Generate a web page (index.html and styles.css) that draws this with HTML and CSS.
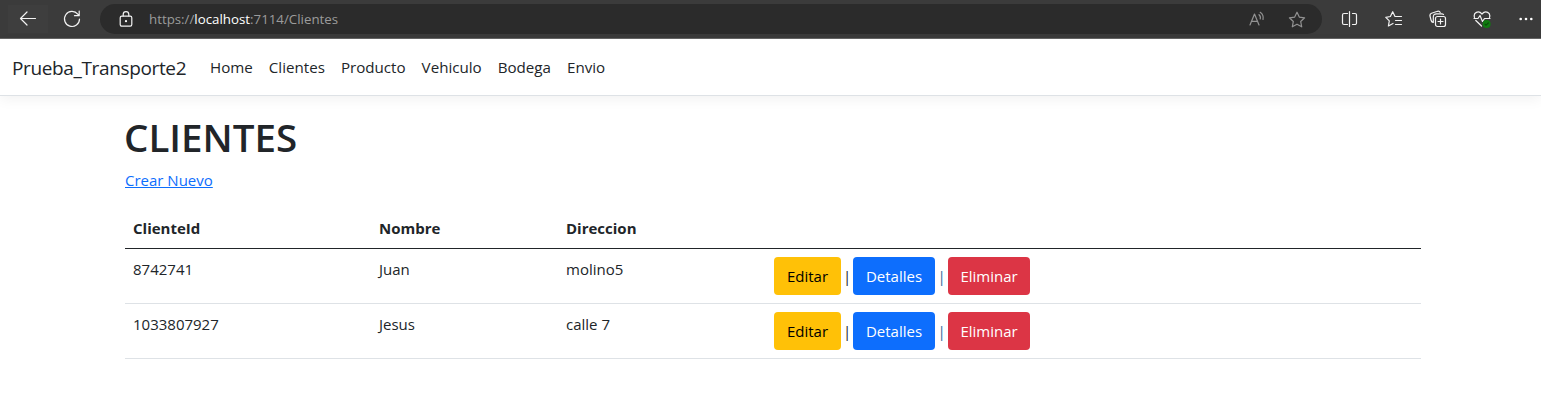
FILE: index.html
```html
<!DOCTYPE html>
<html lang="es">
<head>
<meta charset="utf-8">
<title>Clientes - Prueba_Transporte2</title>
<link rel="stylesheet" href="styles.css">
</head>
<body>
<div class="browser">
  <span class="back"><svg width="18" height="16" viewBox="0 0 18 16"><path d="M16.500 7.500H1.500M8 1L1.500 7.500L8 14"/></svg></span>
  <svg class="reload" width="18" height="18" viewBox="0 0 18 18"><path d="M16.5 9A7.5 7.5 0 1 1 14.8 4.2L16 5.5M16.2 1v4.7h-4.7"/></svg>
  <div class="address">
    <svg class="lock" width="14" height="16" viewBox="0 0 14 16"><rect x="1.2" y="5.2" width="11.6" height="10" rx="1.6"/><path d="M4.2 5V3.4a2.8 2.8 0 0 1 5.6 0V5"/><circle class="dot" cx="7" cy="10.2" r="1.1"/></svg>
    <span class="url">https://<b>localhost</b>:7114/Clientes</span>
    <svg class="read" width="17" height="16" viewBox="0 0 17 16"><path d="M1 14L5.500 3L10 14M2.700 10.300h5.600M10 3.700a4 4 0 0 1 1.200 4.300M11.200 1.300a7 7 0 0 1 2.800 7.200"/></svg>
    <svg class="star" width="18" height="17" viewBox="0 0 18 17"><path d="M9 1.2L11.3 6.1L16.6 6.8L12.7 10.5L13.7 15.8L9 13.2L4.3 15.8L5.3 10.5L1.4 6.8L6.7 6.1Z"/></svg>
  </div>
  <div class="tools">
    <svg width="18" height="18" viewBox="0 0 18 18"><path d="M6.500 3.500H3A1.500 1.500 0 0 0 1.500 5v8A1.500 1.500 0 0 0 3 14.500h3.500M11.500 3.500H14A1.500 1.500 0 0 1 15.500 5v8A1.500 1.500 0 0 1 14 14.500H11.500M8.500 1.500v15"/></svg>
    <svg width="18" height="18" viewBox="0 0 18 18"><path d="M13 6.500H10L7.700 1.700L5.400 6.500L.8 7.300L4.300 10.800L3.400 16L8 13.500M10.500 6.500h6M10.500 10.500h6M10.500 14.500h6"/></svg>
    <svg width="18" height="18" viewBox="0 0 18 18"><rect x="6.500" y="6.500" width="10" height="10" rx="2"/><path d="M11.500 9v5M9 11.500h5M4 12.500Q2.500 12 2 10L1 6Q.600 4 2.500 3.200L8.500 1.300Q10.500 .800 11.200 2.500M4.300 12.500V7Q4.300 3.800 7.500 3.800H12.500Q14 3.800 14.500 4.500"/></svg>
    <svg width="18" height="18" viewBox="0 0 18 18"><path d="M1.500 7.500C0 2.500 5.500 0 9 4C12.500 0 18 2.500 16.500 7.500M2.800 10.500L8.500 16M1 8.500H5L7 5.500L9.500 11.500L11.500 8.500H17"/><circle class="ok" cx="13.600" cy="14" r="4"/><path class="tick" d="M12 14.200l1.100 1L15.300 13"/></svg>
    <svg width="18" height="18" viewBox="0 0 18 18"><g class="dot"><circle cx="3.700" cy="9" r="1.300"/><circle cx="9" cy="9" r="1.300"/><circle cx="14.300" cy="9" r="1.300"/></g></svg>
  </div>
</div>
<nav class="navbar">
  <a class="brand">Prueba_Transporte2</a>
  <a class="link">Home</a><a class="link">Clientes</a><a class="link">Producto</a><a class="link">Vehiculo</a><a class="link">Bodega</a><a class="link">Envio</a>
</nav>
<main class="container">
  <h1>CLIENTES</h1>
  <p class="create"><a href="#">Crear Nuevo</a></p>
  <div class="table">
    <div class="row head"><span>ClienteId</span><span>Nombre</span><span>Direccion</span><span></span></div>
    <div class="row"><span>8742741</span><span>Juan</span><span>molino5</span>
      <div class="actions"><a class="btn edit">Editar</a><i>|</i><a class="btn details">Detalles</a><i class="blue">|</i><a class="btn delete">Eliminar</a></div></div>
    <div class="row"><span>1033807927</span><span>Jesus</span><span>calle 7</span>
      <div class="actions"><a class="btn edit">Editar</a><i>|</i><a class="btn details">Detalles</a><i class="blue">|</i><a class="btn delete">Eliminar</a></div></div>
  </div>
</main>
</body>
</html>
```
FILE: styles.css
```css
* { box-sizing: border-box; }
body { margin: 0; background: #fff; color: #212529; font: 400 15px/24px "Open Sans", "Noto Sans", sans-serif; }
svg { fill: none; stroke: #f2f2f2; stroke-width: 1.2; stroke-linecap: round; stroke-linejoin: round; flex: none; }
.dot { fill: #fff; stroke: none; }
.ok { fill: #107c10; stroke: none; }
.tick { stroke: #0a4f0a; }
.browser { height: 39px; background: #3b3b3b; border-bottom: 1px solid #656565; display: flex; align-items: center; }
.back { display: flex; align-items: center; justify-content: center; width: 40px; height: 28px; margin-left: 8px; background: #3e3e3e; }
.reload { margin-left: 15px; }
.address { display: flex; align-items: center; width: 1222px; height: 30px; margin-left: 19px; padding-left: 19px; border-radius: 15px; background: #2b2b2b; }
.url { flex: 1; margin-left: 16px; font-size: 13.3px; color: #9b9b9b; }
.url b { font-weight: 400; color: #fff; }
.read, .star { stroke: #929292; }
.read { margin-right: 22px; }
.star { margin-right: 16px; }
.tools { display: flex; gap: 26px; margin-left: 19px; }
.navbar { display: flex; align-items: center; height: 57px; padding-left: 12px; border-bottom: 1px solid #dee2e6; box-shadow: 0 4px 12px rgba(0,0,0,.05); white-space: nowrap; }
.brand { width: 198px; font-size: 19px; letter-spacing: -.36px; padding-top: 1px; }
.link { margin-right: 16px; font-size: 15.15px; }
.container { width: 1296px; margin-left: 125px; }
h1 { margin: 0 0 0 -1px; padding-top: 17px; font-size: 38.5px; line-height: 48px; font-weight: 600; }
.create { margin: 7px 0 16px; }
.create a { color: #0d6efd; }
.row { display: grid; grid-template-columns: 246px 187px 208px 1fr; height: 55px; padding: 8px 0 0 8px; border-bottom: 1px solid #dee2e6; }
.head { height: 41px; font-weight: 700; border-color: #212529; }
.actions { display: flex; align-items: center; height: 38px; }
.actions i { width: 12px; text-align: center; font-style: normal; }
.actions i.blue { width: 13px; color: #306d9c; }
.btn { display: flex; align-items: center; justify-content: center; height: 38px; width: 82px; border-radius: 4px; color: #fff; }
.edit { width: 67px; background: #ffc107; color: #000; }
.details { background: #0d6efd; }
.delete { background: #dc3545; }
```
